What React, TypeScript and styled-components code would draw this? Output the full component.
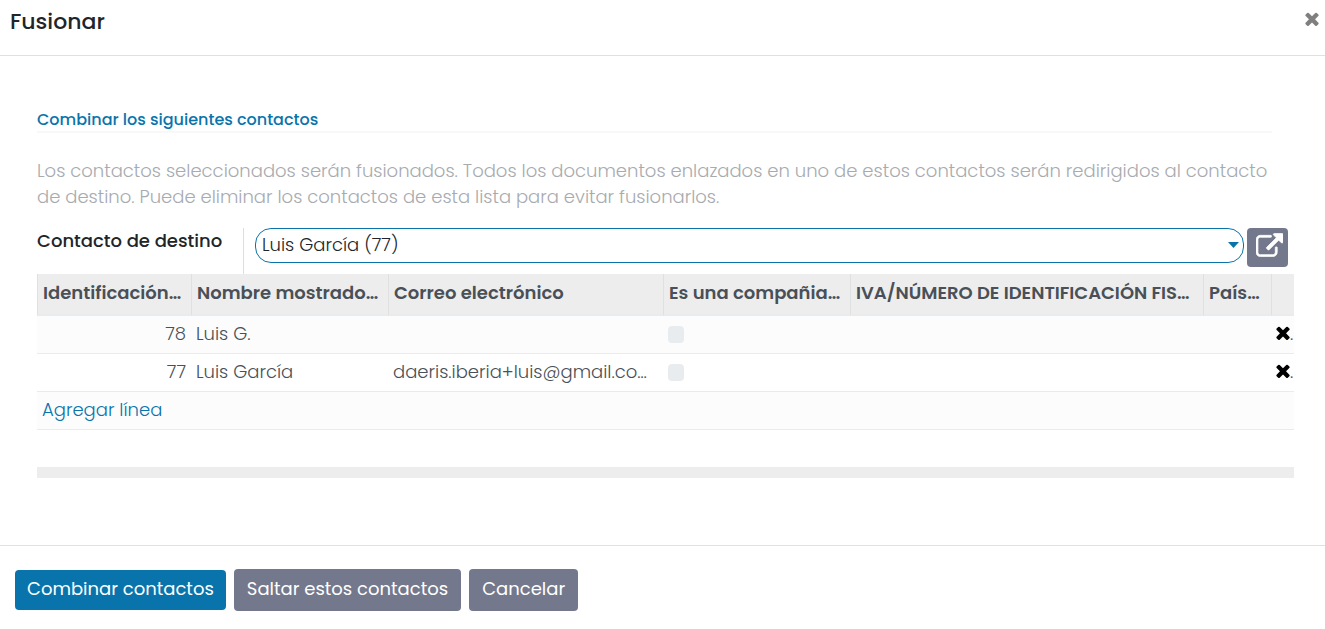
import React from "react";
import styled, { createGlobalStyle } from "styled-components";

const GlobalStyle = createGlobalStyle`
  *, *::before, *::after { box-sizing: border-box; }
  body {
    margin: 0;
    background: #fff;
    color: #212529;
    font-family: Poppins, Inter, "Open Sans", sans-serif;
    font-size: 18px;
    font-weight: 300;
    line-height: 26px;
  }
  button, input, select { font: inherit; }
`;

const Dialog = styled.section`
  display: flex;
  flex-direction: column;
  background: #fff;
`;

const Header = styled.header`
  display: flex;
  justify-content: space-between;
  align-items: flex-start;
  height: 56px;
  padding: 8px 6px 0 10px;
  border-bottom: 1px solid #dee0e2;
`;

const Title = styled.h4`
  margin: 0;
  font-size: 22px;
  font-weight: 500;
  line-height: 28px;
`;

const IconButton = styled.button<{ $color: string }>`
  display: inline-flex;
  align-items: center;
  padding: 0;
  border: 0;
  background: none;
  color: ${(p) => p.$color};
  cursor: pointer;
`;

const CloseButton = styled(IconButton)`
  height: 22px;
`;

const Body = styled.main`
  padding: 52px 31px 67px 37px;
`;

const SectionTitle = styled.h2`
  margin: 0 22px 0 0;
  border-bottom: 2px solid #f8f8f9;
  color: #0974ab;
  font-size: 16px;
  font-weight: 500;
  line-height: 23px;
`;

const Hint = styled.p`
  margin: 25px 0 18px;
  color: #a7abaf;
`;

const FieldRow = styled.div`
  display: flex;
  align-items: stretch;
  height: 46px;
  padding-right: 6px;
`;

const FieldLabel = styled.label`
  width: 207px;
  flex: none;
  margin-right: 11px;
  border-right: 1px solid #dcdee0;
  font-weight: 500;
`;

const SelectBox = styled.div`
  position: relative;
  flex: 1;
`;

const ContactSelect = styled.select`
  width: 100%;
  height: 35px;
  padding: 0 24px 2px 6px;
  border: 1px solid #0974ab;
  border-radius: 16px;
  background: #fff;
  color: #212529;
  appearance: none;
`;

const Caret = styled.svg`
  position: absolute;
  top: 14px;
  right: 5px;
  width: 11px;
  height: 6px;
  fill: #0974ab;
  pointer-events: none;
`;

const OpenButton = styled.button`
  display: flex;
  justify-content: flex-end;
  width: 41px;
  height: 39px;
  margin-left: 3px;
  padding: 5px;
  border: 0;
  border-radius: 4px;
  background: #74788d;
  color: #fff;
`;

const Table = styled.table`
  width: 100%;
  table-layout: fixed;
  border-collapse: separate;
  border-spacing: 0;
  color: #495057;
`;

const HeadCell = styled.th`
  height: 42px;
  padding: 0 0 2px 5px;
  border-left: 1px solid #dee0e2;
  border-bottom: 2px solid #e9ecef;
  background: #ededed;
  font-weight: 600;
  text-align: left;
  white-space: nowrap;
`;

const Row = styled.tr<{ $shaded?: boolean }>`
  background: ${(p) => (p.$shaded ? "#fcfcfc" : "#fff")};
`;

const Cell = styled.td<{ $right?: boolean }>`
  height: 38px;
  padding: 0 5px 2px;
  border-bottom: 1px solid #e9ebed;
  text-align: ${(p) => (p.$right ? "right" : "left")};
  white-space: nowrap;
`;

const DeleteCell = styled(Cell)`
  padding: 0 0 2px 5px;
  overflow: hidden;
`;

const EmptyCell = styled.td`
  height: 37px;
  padding: 0;
`;

const FootCell = styled.td`
  height: 11px;
  padding: 0;
  background: #ededed;
`;

const Check = styled.input`
  display: block;
  width: 16px;
  height: 17px;
  margin: 2px 0 0;
  border-radius: 4px;
  background: #e9ecef;
  appearance: none;
`;

const AddLink = styled.a`
  color: #0974ab;
  text-decoration: none;
`;

const Footer = styled.footer`
  display: flex;
  align-items: center;
  gap: 8px;
  padding: 23px 15px 18px;
  border-top: 1px solid #dee0e2;
`;

const Button = styled.button<{ $primary?: boolean }>`
  height: ${(p) => (p.$primary ? 40 : 42)}px;
  padding: 0 ${(p) => (p.$primary ? 12 : 13)}px 2px;
  border: 0;
  border-radius: 4px;
  background: ${(p) => (p.$primary ? "#0974ab" : "#74788d")};
  color: #fff;
  font-weight: 400;
`;

const TimesIcon = ({ size }: { size: number }) => (
  <svg width={size} height={size} viewBox="302 302 1188 1252" fill="currentColor" aria-hidden="true">
    <path d="M1490 1322q0 40-28 68l-136 136q-28 28-68 28t-68-28l-294-294-294 294q-28 28-68 28t-68-28l-136-136q-28-28-28-68t28-68l294-294-294-294q-28-28-28-68t28-68l136-136q28-28 68-28t68 28l294 294 294-294q28-28 68-28t68 28l136 136q28 28 28 68t-28 68l-294 294 294 294q28 28 28 68z" />
  </svg>
);

const ExternalLinkIcon = () => (
  <svg width="27" height="24" viewBox="0 0 1792 1536" fill="currentColor" stroke="currentColor" strokeWidth="50" aria-hidden="true">
    <path d="M1408 928v320q0 119-84.5 203.5t-203.5 84.5h-832q-119 0-203.5-84.5t-84.5-203.5v-832q0-119 84.5-203.5t203.5-84.5h704q14 0 23 9t9 23v64q0 14-9 23t-23 9h-704q-66 0-113 47t-47 113v832q0 66 47 113t113 47h832q66 0 113-47t47-113v-320q0-14 9-23t23-9h64q14 0 23 9t9 23zm384-864v512q0 26-19 45t-45 19-45-19l-176-176-652 652q-10 10-23 10t-23-10l-114-114q-10-10-10-23t10-23l652-652-176-176q-19-19-19-45t19-45 45-19h512q26 0 45 19t19 45z" />
  </svg>
);

const columns = [
  { label: "Identificación…", width: 154 },
  { label: "Nombre mostrado…", width: 197 },
  { label: "Correo electrónico", width: 275 },
  { label: "Es una compañia…", width: 187 },
  { label: "IVA/NÚMERO DE IDENTIFICACIÓN FIS…", width: 353 },
  { label: "País…", width: 68 },
  { label: "", width: 23 },
];

const contacts = [
  { id: 78, name: "Luis G.", email: "" },
  { id: 77, name: "Luis García", email: "daeris.iberia+luis@gmail.co…" },
];

export default function App() {
  return (
    <>
      <GlobalStyle />
      <Dialog aria-labelledby="dialog-title">
        <Header>
          <Title id="dialog-title">Fusionar</Title>
          <CloseButton $color="#7f7f7f" aria-label="Cerrar">
            <TimesIcon size={14} />
          </CloseButton>
        </Header>
        <Body>
          <SectionTitle>Combinar los siguientes contactos</SectionTitle>
          <Hint>
            Los contactos seleccionados serán fusionados. Todos los documentos enlazados en uno de estos contactos
            serán redirigidos al contacto de destino. Puede eliminar los contactos de esta lista para evitar
            fusionarlos.
          </Hint>
          <FieldRow>
            <FieldLabel htmlFor="destination">Contacto de destino</FieldLabel>
            <SelectBox>
              <ContactSelect id="destination" defaultValue="77">
                <option value="77">Luis García (77)</option>
                <option value="78">Luis G. (78)</option>
              </ContactSelect>
              <Caret viewBox="0 0 11 6" aria-hidden="true">
                <path d="M0 0h11L5.500 6z" />
              </Caret>
            </SelectBox>
            <OpenButton type="button" aria-label="Abrir contacto">
              <ExternalLinkIcon />
            </OpenButton>
          </FieldRow>
          <Table>
            <colgroup>
              {columns.map((c) => (
                <col key={c.label} width={c.width} />
              ))}
            </colgroup>
            <thead>
              <tr>
                {columns.map((c) => (
                  <HeadCell key={c.label} scope="col">
                    {c.label}
                  </HeadCell>
                ))}
              </tr>
            </thead>
            <tbody>
              {contacts.map((c, i) => (
                <Row key={c.id} $shaded={i % 2 === 0}>
                  <Cell $right>{c.id}</Cell>
                  <Cell>{c.name}</Cell>
                  <Cell>{c.email}</Cell>
                  <Cell>
                    <Check type="checkbox" disabled aria-label={`${c.name} es una compañia`} />
                  </Cell>
                  <Cell />
                  <Cell />
                  <DeleteCell>
                    <IconButton $color="#000" aria-label={`Eliminar ${c.name}`}>
                      <TimesIcon size={14} />
                    </IconButton>
                    .
                  </DeleteCell>
                </Row>
              ))}
              <Row $shaded>
                <Cell colSpan={7}>
                  <AddLink href="#">Agregar línea</AddLink>
                </Cell>
              </Row>
              <tr>
                <EmptyCell colSpan={7} />
              </tr>
            </tbody>
            <tfoot>
              <tr>
                <FootCell colSpan={7} />
              </tr>
            </tfoot>
          </Table>
        </Body>
        <Footer>
          <Button type="button" $primary>
            Combinar contactos
          </Button>
          <Button type="button">Saltar estos contactos</Button>
          <Button type="button">Cancelar</Button>
        </Footer>
      </Dialog>
    </>
  );
}
